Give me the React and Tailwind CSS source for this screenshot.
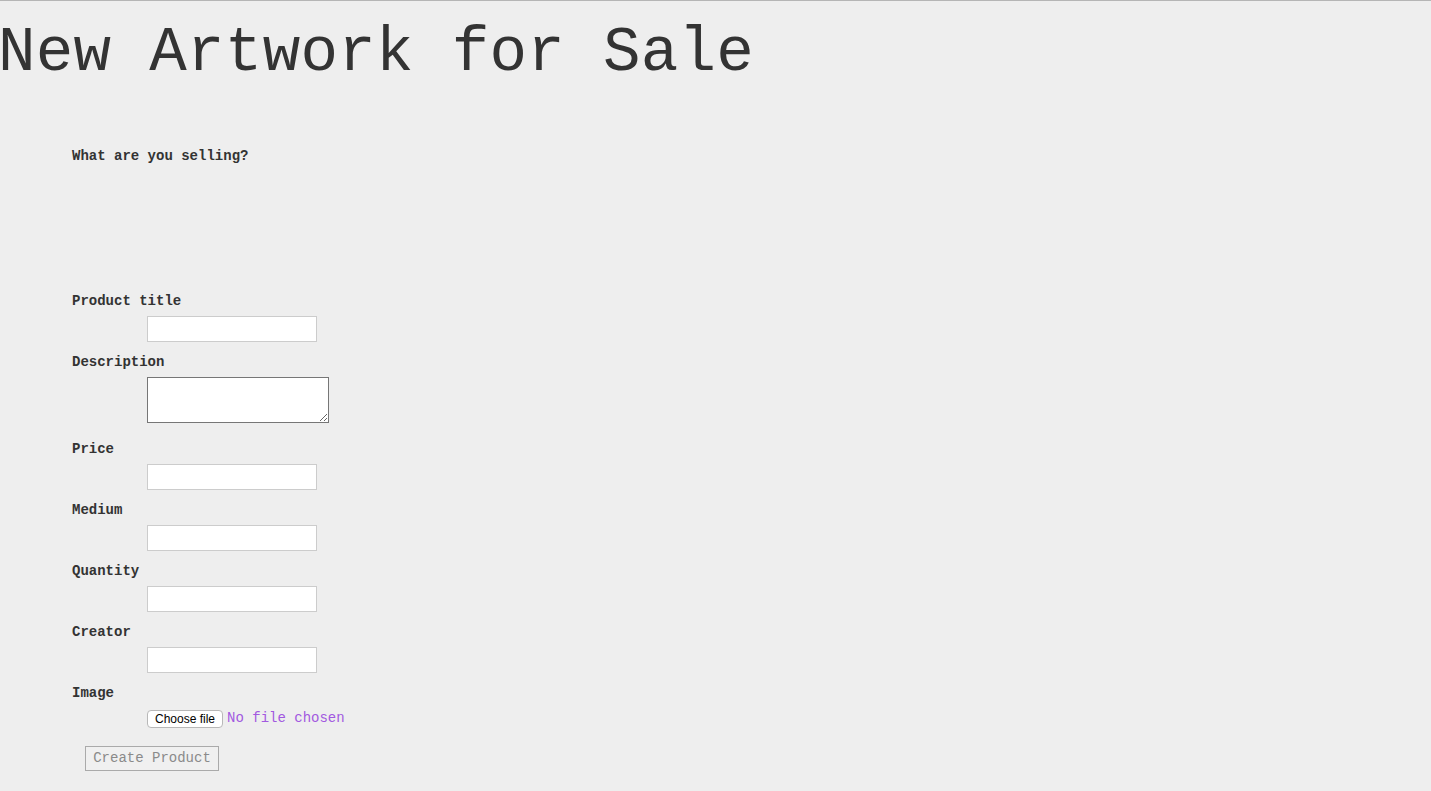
const fields = ["Product title", "Description", "Price", "Medium", "Quantity", "Creator"];

export default function App() {
  return (
    <div className="min-h-[791px] bg-[#eeeeee] border-t border-[#b5b5b5] text-[#333333] font-['Liberation_Mono','Courier_New',monospace]">
      <h1 className="-ml-[2px] pt-[18px] text-[62.5px] leading-[70px] font-normal tracking-[0.3px]">New Artwork for Sale</h1>

      <form className="pl-[72px] pt-[57px]">
        <p className="text-[14px] leading-[20px] font-bold">What are you selling?</p>

        <div className="mt-[125px]">
          {fields.map((name) => (
            <div key={name}>
              <label className="block text-[14px] leading-[20px] font-bold">{name}</label>
              {name === "Description" ? (
                <textarea className="block ml-[75px] mt-[5px] mb-[16px] w-[182px] h-[46px] bg-white border border-[#767676] resize-y" />
              ) : (
                <input type="text" className="block ml-[75px] mt-[5px] mb-[10px] w-[170px] h-[26px] bg-white border border-[#cccccc] outline-none" />
              )}
            </div>
          ))}
          <div>
            <label className="block text-[14px] leading-[20px] font-bold">Image</label>
            <div className="ml-[75px] mt-[5px] flex items-center gap-[4px]">
              <span className="h-[18px] px-[7px] flex items-center bg-white border border-[#b8b8b8] rounded-[4px] text-[12px] text-black font-['Liberation_Sans',Arial,sans-serif]">Choose file</span>
              <span className="text-[14px] text-[#a259e0]">No file chosen</span>
            </div>
          </div>
          <button type="button" className="ml-[13px] mt-[17px] w-[134px] h-[25px] bg-[#f0f0f0] border border-[#aaaaaa] text-[14px] text-[#8a8a8a] font-['Liberation_Mono','Courier_New',monospace]">Create Product</button>
        </div>
      </form>
    </div>
  );
}
